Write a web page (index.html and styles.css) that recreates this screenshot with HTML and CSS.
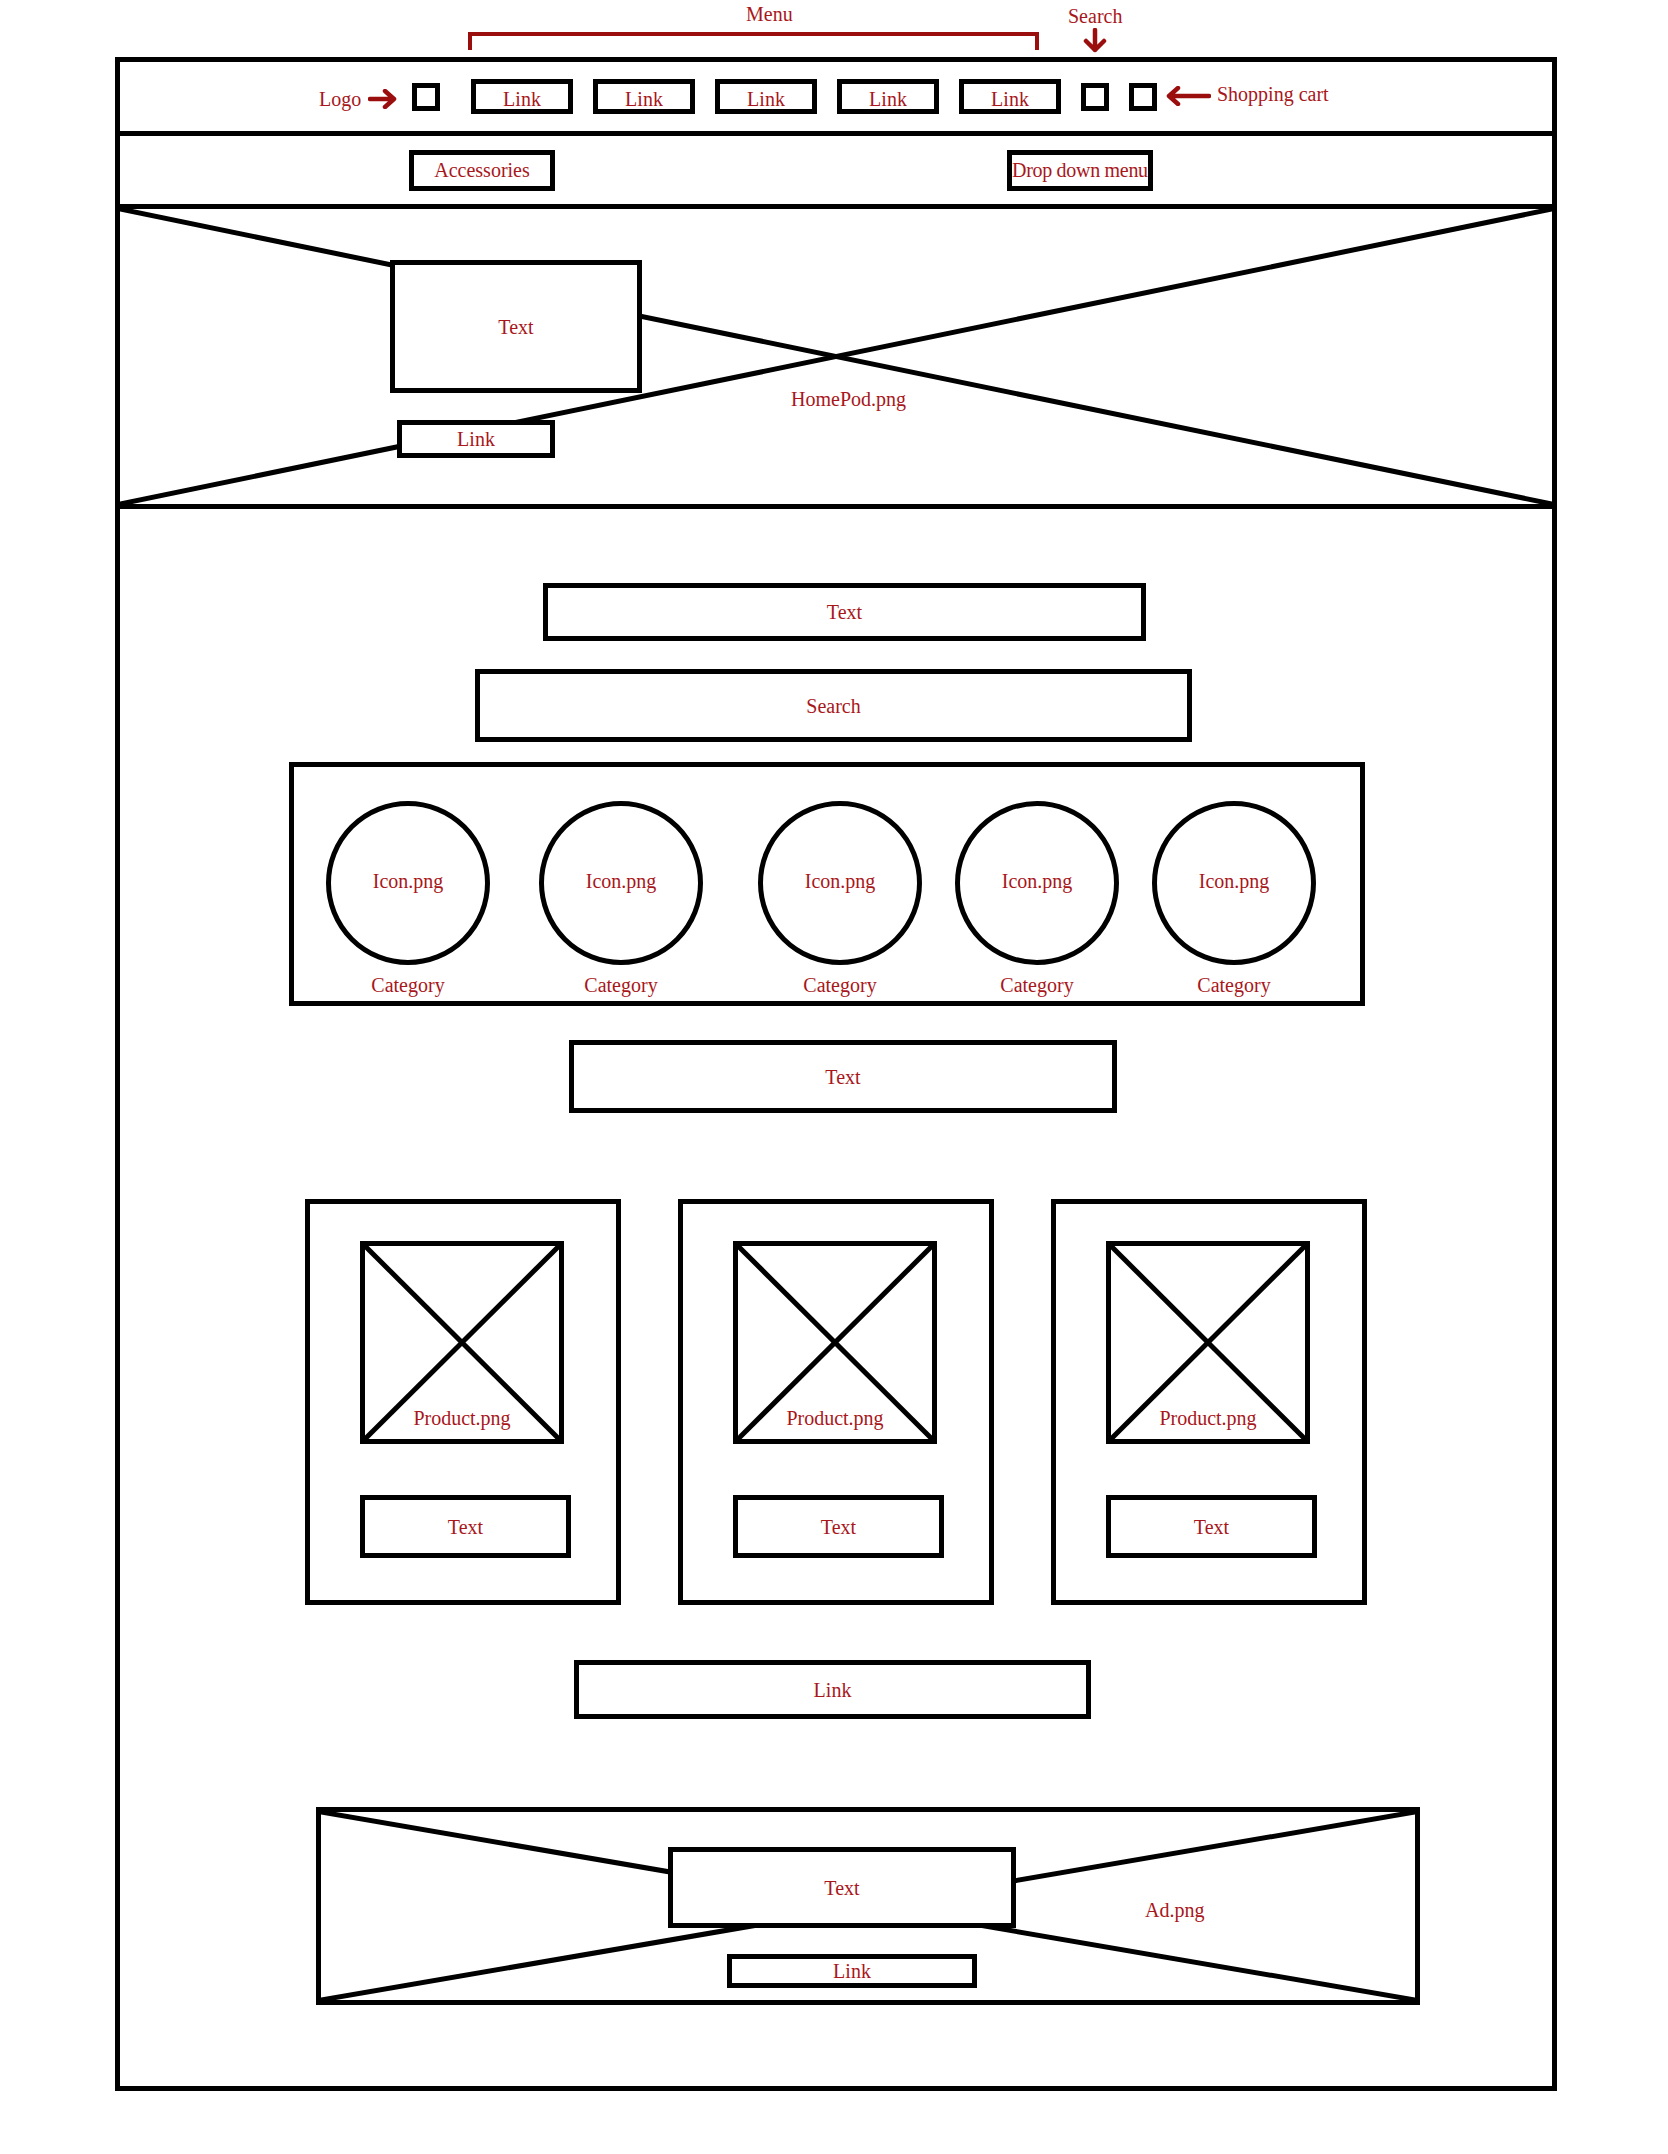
FILE: index.html
```html
<!DOCTYPE html>
<html lang="en">
<head>
    <meta charset="UTF-8">
    <meta name="viewport" content="width=device-width, initial-scale=1.0">
    <title>Store Wireframe</title>
    <link rel="stylesheet" href="styles.css">
</head>
<body>
<div class="page">
    <!-- annotations -->
    <div class="note note-menu">Menu</div>
    <div class="bracket"></div>
    <div class="note note-search">Search</div>
    <svg class="arrow arrow-search" viewBox="0 0 24 26"><path d="M12 2 V22 M3 13 L12 22 L21 13"/></svg>
    <div class="note note-logo">Logo</div>
    <svg class="arrow arrow-logo" viewBox="0 0 30 20"><path d="M2 10 H26 M17 2 L26 10 L17 18"/></svg>
    <svg class="arrow arrow-cart" viewBox="0 0 46 20"><path d="M44 10 H4 M13 2 L4 10 L13 18"/></svg>
    <div class="note note-cart">Shopping cart</div>

    <div class="frame">
        <div class="nav">
            <div class="box icon-box logo"></div>
            <div class="box nav-link">Link</div>
            <div class="box nav-link">Link</div>
            <div class="box nav-link">Link</div>
            <div class="box nav-link">Link</div>
            <div class="box nav-link">Link</div>
            <div class="box icon-box"></div>
            <div class="box icon-box"></div>
        </div>

        <div class="subnav">
            <div class="box sub-item">Accessories</div>
            <div class="box sub-item dropdown">Drop down menu</div>
        </div>

        <div class="hero">
            <svg class="cross" viewBox="0 0 100 100" preserveAspectRatio="none">
                <line x1="0" y1="0" x2="100" y2="100"/>
                <line x1="100" y1="0" x2="0" y2="100"/>
            </svg>
            <div class="box hero-text">Text</div>
            <div class="box hero-link">Link</div>
            <div class="img-label hero-label">HomePod.png</div>
        </div>

        <div class="main">
            <div class="box block text-1">Text</div>
            <div class="box block search">Search</div>

            <div class="box categories">
                <div class="cat"><div class="circle">Icon.png</div><span>Category</span></div>
                <div class="cat"><div class="circle">Icon.png</div><span>Category</span></div>
                <div class="cat"><div class="circle">Icon.png</div><span>Category</span></div>
                <div class="cat"><div class="circle">Icon.png</div><span>Category</span></div>
                <div class="cat"><div class="circle">Icon.png</div><span>Category</span></div>
            </div>

            <div class="box block text-2">Text</div>

            <div class="products">
                <div class="box card">
                    <div class="box product-img">
                        <svg class="cross" viewBox="0 0 100 100" preserveAspectRatio="none">
                            <line x1="0" y1="0" x2="100" y2="100"/>
                            <line x1="100" y1="0" x2="0" y2="100"/>
                        </svg>
                        <span class="img-label">Product.png</span>
                    </div>
                    <div class="box product-text">Text</div>
                </div>
                <div class="box card">
                    <div class="box product-img">
                        <svg class="cross" viewBox="0 0 100 100" preserveAspectRatio="none">
                            <line x1="0" y1="0" x2="100" y2="100"/>
                            <line x1="100" y1="0" x2="0" y2="100"/>
                        </svg>
                        <span class="img-label">Product.png</span>
                    </div>
                    <div class="box product-text">Text</div>
                </div>
                <div class="box card">
                    <div class="box product-img">
                        <svg class="cross" viewBox="0 0 100 100" preserveAspectRatio="none">
                            <line x1="0" y1="0" x2="100" y2="100"/>
                            <line x1="100" y1="0" x2="0" y2="100"/>
                        </svg>
                        <span class="img-label">Product.png</span>
                    </div>
                    <div class="box product-text">Text</div>
                </div>
            </div>

            <div class="box block more-link">Link</div>

            <div class="box ad">
                <svg class="cross" viewBox="0 0 100 100" preserveAspectRatio="none">
                    <line x1="0" y1="0" x2="100" y2="100"/>
                    <line x1="100" y1="0" x2="0" y2="100"/>
                </svg>
                <div class="box ad-text">Text</div>
                <div class="box ad-link">Link</div>
                <div class="img-label ad-label">Ad.png</div>
            </div>
        </div>
    </div>
</div>
</body>
</html>
```

FILE: styles.css
```css
body {
    margin: 0;
    background: #fff;
    font-family: "Liberation Serif", "Times New Roman", serif;
    font-size: 20px;
    color: #a8171b;
}
.page {
    position: relative;
    width: 1668px;
    height: 2154px;
    padding-top: 57px;
    box-sizing: border-box;
}

/* annotations */
.note {
    position: absolute;
    line-height: 22px;
    white-space: nowrap;
}
.note-menu { left: 746px; top: 3px; }
.note-search { left: 1068px; top: 5px; }
.note-logo { left: 319px; top: 88px; }
.note-cart { left: 1217px; top: 83px; }
.bracket {
    position: absolute;
    left: 468px;
    top: 32px;
    width: 571px;
    height: 18px;
    box-sizing: border-box;
    border: 4px solid #9b0e0e;
    border-bottom: none;
}
.arrow {
    position: absolute;
    fill: none;
    stroke: #9b0e0e;
    stroke-width: 4.5;
    stroke-linecap: round;
    stroke-linejoin: round;
}
.arrow-search { left: 1083px; top: 28px; width: 24px; height: 26px; }
.arrow-logo { left: 368px; top: 89px; width: 30px; height: 20px; }
.arrow-cart { left: 1165px; top: 86px; width: 46px; height: 20px; }

/* wireframe */
.frame {
    margin-left: 115px;
    width: 1442px;
    border: 5px solid #000;
    box-sizing: border-box;
}
.box {
    box-sizing: border-box;
    border: 5px solid #000;
    background: #fff;
    display: flex;
    align-items: center;
    justify-content: center;
    line-height: 22px;
}

.nav {
    display: flex;
    align-items: center;
    gap: 20px;
    height: 74px;
    padding-left: 292px;
    border-bottom: 5px solid #000;
    box-sizing: border-box;
}
.icon-box {
    width: 28px;
    height: 28px;
}
.logo { margin-right: 11px; }
.nav-link {
    width: 102px;
    height: 35px;
    padding-top: 4px;
}

.subnav {
    display: flex;
    align-items: center;
    height: 73px;
    padding-left: 289px;
    border-bottom: 5px solid #000;
    box-sizing: border-box;
}
.sub-item {
    width: 146px;
    height: 41px;
}
.dropdown {
    margin-left: 452px;
    justify-content: flex-start;
    white-space: nowrap;
    letter-spacing: -0.3px;
}

.hero {
    position: relative;
    height: 300px;
    padding: 51px 0 0 270px;
    border-bottom: 5px solid #000;
    box-sizing: border-box;
}
.cross {
    position: absolute;
    left: 0;
    top: 0;
    width: 100%;
    height: 100%;
}
.cross line {
    stroke: #000;
    stroke-width: 5px;
    vector-effect: non-scaling-stroke;
}
.hero-text {
    position: relative;
    width: 252px;
    height: 133px;
}
.hero-link {
    position: relative;
    width: 158px;
    height: 38px;
    margin: 27px 0 0 7px;
}
.img-label {
    position: relative;
    line-height: 22px;
}
.hero-label {
    position: absolute;
    left: 671px;
    top: 179px;
}

.main {
    display: flex;
    flex-direction: column;
    align-items: flex-start;
    padding: 74px 0 81px;
}
.text-1 {
    margin-left: 423px;
    width: 603px;
    height: 58px;
}
.search {
    margin: 28px 0 0 355px;
    width: 717px;
    height: 73px;
}

.categories {
    margin: 20px 0 0 169px;
    width: 1076px;
    height: 244px;
    align-items: flex-start;
    justify-content: flex-start;
    padding: 34px 0 0 32px;
}
.cat {
    display: flex;
    flex-direction: column;
    align-items: center;
    gap: 9px;
}
.cat:nth-child(2) { margin-left: 49px; }
.cat:nth-child(3) { margin-left: 55px; }
.cat:nth-child(4),
.cat:nth-child(5) { margin-left: 33px; }
.circle {
    width: 164px;
    height: 164px;
    border: 5px solid #000;
    border-radius: 50%;
    box-sizing: border-box;
    display: flex;
    align-items: center;
    justify-content: center;
    padding-bottom: 4px;
}

.text-2 {
    margin: 34px 0 0 449px;
    width: 548px;
    height: 73px;
}

.products {
    display: flex;
    gap: 57px;
    margin: 86px 0 0 185px;
}
.card {
    width: 316px;
    height: 406px;
    flex-direction: column;
    align-items: flex-start;
    justify-content: flex-start;
    padding: 37px 0 0 50px;
}
.product-img {
    position: relative;
    width: 204px;
    height: 203px;
    align-items: flex-end;
    padding-bottom: 10px;
}
.product-text {
    margin-top: 51px;
    width: 211px;
    height: 63px;
}

.more-link {
    margin: 55px 0 0 454px;
    width: 517px;
    height: 59px;
}

.ad {
    position: relative;
    margin: 88px 0 0 196px;
    width: 1104px;
    height: 198px;
    flex-direction: column;
    align-items: flex-start;
    justify-content: flex-start;
    padding: 35px 0 0 347px;
}
.ad-text {
    position: relative;
    width: 348px;
    height: 81px;
}
.ad-link {
    position: relative;
    margin: 26px 0 0 59px;
    width: 250px;
    height: 34px;
}
.ad-label {
    position: absolute;
    left: 824px;
    top: 87px;
}
```
